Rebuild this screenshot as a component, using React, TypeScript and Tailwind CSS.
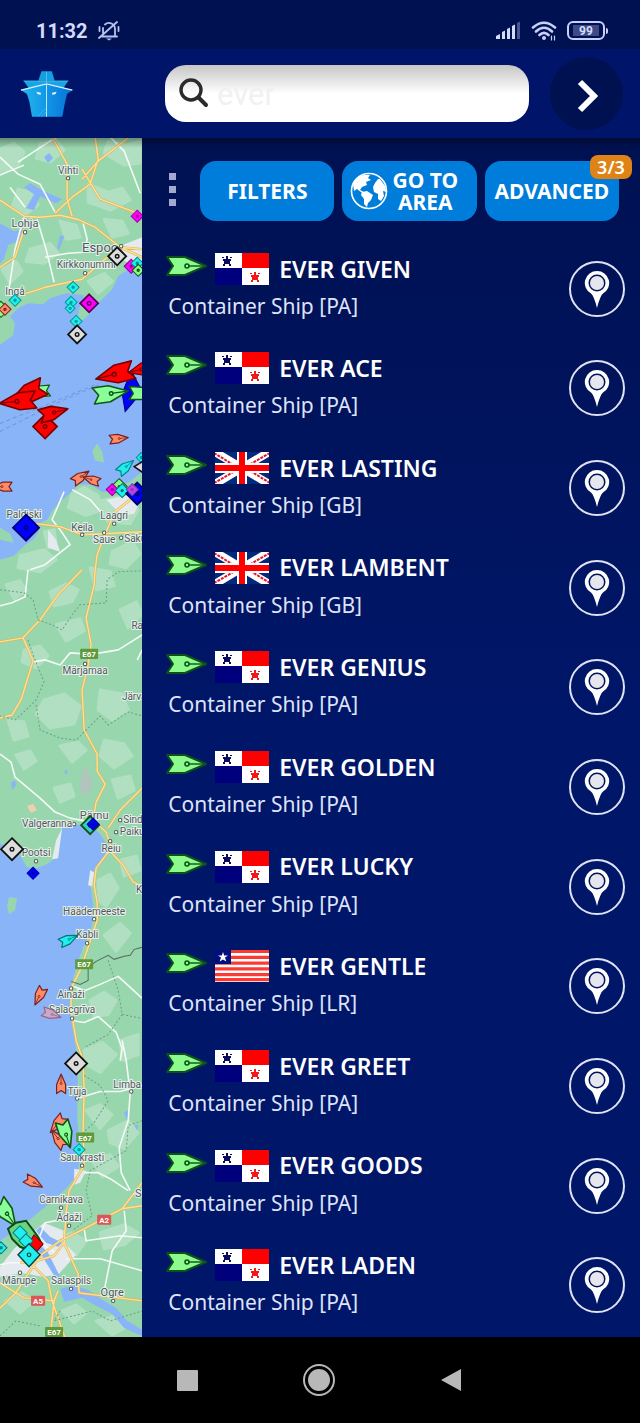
import { useState } from "react"

type Flag = "PA" | "GB" | "LR"

type Vessel = {
  name: string
  flag: Flag
}

const vessels: Vessel[] = [
  { name: "EVER GIVEN", flag: "PA" },
  { name: "EVER ACE", flag: "PA" },
  { name: "EVER LASTING", flag: "GB" },
  { name: "EVER LAMBENT", flag: "GB" },
  { name: "EVER GENIUS", flag: "PA" },
  { name: "EVER GOLDEN", flag: "PA" },
  { name: "EVER LUCKY", flag: "PA" },
  { name: "EVER GENTLE", flag: "LR" },
  { name: "EVER GREET", flag: "PA" },
  { name: "EVER GOODS", flag: "PA" },
  { name: "EVER LADEN", flag: "PA" },
]

// Anchored vessels: centre, half size, fill, outline
const diamonds: [number, number, number, string, string][] = [
  [137, 217, 6, "#f0f", "#a0a"],
  [131, 267, 7, "#f0f", "#808"],
  [137, 264, 6, "#2ee", "#088"],
  [138, 271, 6, "#8f8", "#151"],
  [117, 257, 9, "#ddd", "#111"],
  [89, 304, 9, "#f0f", "#505"],
  [73, 288, 6, "#2ee", "#099"],
  [71, 303, 6, "#2ee", "#099"],
  [70, 309, 5, "#2ee", "#099"],
  [76, 322, 6, "#2ee", "#099"],
  [77, 335, 9, "#ddd", "#111"],
  [15, 301, 6, "#2ee", "#099"],
  [1, 310, 8, "#8f8", "#151"],
  [5, 310, 6, "#ff8a66", "#722"],
  [45, 427, 12, "#f00", "#700"],
  [141, 458, 5, "#2ee", "#099"],
  [119, 487, 8, "#8f8", "#151"],
  [112, 490, 6, "#f0f", "#808"],
  [122, 491, 7, "#2ee", "#077"],
  [137, 494, 11, "#00e", "#006"],
  [132, 490, 6, "#d3e", "#55a"],
  [26, 528, 13, "#00f", "#007"],
  [90, 825, 9, "#3cc", "#151"],
  [93, 824, 6, "#00e", "#00a"],
  [12, 849, 11, "#ddd", "#111"],
  [33, 873, 6, "#00e", "#00b"],
  [76, 1063, 11, "#ddd", "#111"],
  [79, 1149, 6, "#2ee", "#099"],
  [1, 1247, 6, "#2ee", "#077"],
]

// Vessels under way: centre, heading, scale, fill, outline
const arrows: [number, number, number, number, string, string][] = [
  [38, 392, 175, 0.6, "#8f9", "#151"],
  [26, 395, 155, 1, "#f00", "#700"],
  [17, 402, 174, 0.95, "#f00", "#700"],
  [54, 413, -15, 0.75, "#f00", "#700"],
  [114, 375, 166, 1, "#f00", "#700"],
  [141, 370, 166, 0.7, "#f00", "#700"],
  [111, 394, -8, 0.9, "#8f9", "#151"],
  [119, 439, -6, 0.48, "#ff8a66", "#722"],
  [81, 477, -35, 0.5, "#ff8a66", "#722"],
  [91, 480, 198, 0.45, "#ff8a66", "#722"],
  [2, 487, 180, 0.5, "#ff8a66", "#722"],
  [126, 467, -40, 0.5, "#2ee", "#088"],
  [69, 939, -24, 0.5, "#2ee", "#077"],
  [39, 996, 116, 0.5, "#ff8a66", "#722"],
  [52, 1014, 18, 0.5, "#c9a9c9", "#968"],
  [61, 1083, -90, 0.5, "#ff8a66", "#722"],
  [57, 1124, 130, 0.55, "#ff8a66", "#722"],
  [58, 1138, 232, 0.55, "#ff8a66", "#722"],
  [66, 1134, 72, 0.72, "#8f9", "#151"],
  [34, 1182, 28, 0.5, "#ff8a66", "#722"],
  [7, 1213, 55, 0.8, "#8f9", "#151"],
]

// Place labels: x, y, size, text
const places: [number, number, number, string][] = [
  [68, 175, 10, "Vihti"],
  [25, 228, 11, "Lohja"],
  [100, 253, 13, "Espoo"],
  [86, 269, 10, "Kirkkonummi"],
  [15, 296, 10, "Ingå"],
  [24, 518, 10, "Paldiski"],
  [82, 531, 10, "Keila"],
  [114, 519, 10, "Laagri"],
  [104, 543, 10, "Saue"],
  [135, 542, 10, "Saku"],
  [85, 674, 10, "Märjamaa"],
  [137, 629, 10, "Ra"],
  [134, 700, 10, "Järva"],
  [94, 819, 11, "Pärnu"],
  [47, 827, 10, "Valgeranna"],
  [134, 823, 10, "Sindi"],
  [132, 835, 10, "Paiku"],
  [36, 856, 10, "Pootsi"],
  [111, 852, 10, "Reiu"],
  [139, 893, 10, "K"],
  [94, 915, 10, "Häädemeeste"],
  [87, 938, 10, "Kabli"],
  [71, 998, 10, "Ainaži"],
  [72, 1013, 10, "Salacgrīva"],
  [77, 1094, 10, "Tūja"],
  [127, 1087, 10, "Limba"],
  [82, 1160, 10, "Saulkrasti"],
  [61, 1202, 10, "Carnikava"],
  [69, 1220, 10, "Ādaži"],
  [138, 1196, 11, "S"],
  [19, 1283, 10, "Mārupe"],
  [71, 1283, 10, "Salaspils"],
  [112, 1295, 11, "Ogre"],
]

const towns: [number, number][] = [
  [68, 179], [25, 233], [121, 247], [85, 274], [82, 535], [114, 524], [104, 533], [121, 538],
  [85, 664], [74, 824], [120, 820], [116, 832], [36, 861], [110, 841], [94, 919], [87, 943],
  [71, 988], [72, 1018], [77, 1098], [131, 1091], [82, 1165], [61, 1207], [69, 1225],
  [20, 1272], [71, 1288], [113, 1300],
]

const roadSigns: [number, number, string, string][] = [
  [89, 654, "E67", "#5f9a3c"],
  [84, 964, "E67", "#5f9a3c"],
  [85, 1137, "E67", "#5f9a3c"],
  [54, 1331, "E67", "#5f9a3c"],
  [104, 1219, "A2", "#dc5656"],
  [38, 1300, "A5", "#dc5656"],
]

const fields =
  "M0 150l14-6 10 9-6 14-18 6zM40 145l16-4 8 10-14 12-14-4zM108 142l18 4 14-4v22l-16 2-20-12zM18 190l16 4 4 12-14 10-12-8zM88 185l20 8 14-4 8 12-20 10-22-8zM30 250l20-6 8 10-14 10-18-2zM88 282l16-8 8 8-14 12zM60 222l16 4 4 12-14 2zM2 270l14-8 6 10-12 12zM104 220l18 2 6 12-16 4z" +
  "M72 494l12-6 14 8 4 14-16 6-18-8zM96 502l28-6 14 14-8 14-22-2zM44 532l10-2 2 12-8 6zM20 556l24-6 12 10-16 12-22-4zM112 552l20-10 8 12-14 14-16-4zM6 585l14-4 6 10-12 8zM50 592l16-8 12 6-6 12-18 4zM90 568l20 4 4 14-18 4zM120 610l16-8 6 12-14 14zM56 625l24-6 4 12-18 10zM24 650l16-4 8 10-12 12-14-6zM44 700l20-6 16 12-6 18-24 4-14-14zM100 690l22 4 6 16-16 10-14-10zM8 720l16 2 4 14-14 4zM60 746l18-4 8 8-14 12zM104 740l20 4 8 12-18 12-14-12zM16 755l14-4 6 10-12 8zM112 780l18-4 4 14-16 8zM54 788l16-4 4 12-14 6z" +
  "M98 880l12-6 8 14-12 18-8-6zM120 860l16-4 4 14-16 6zM104 935l16-12 10 10-14 18zM90 1000l14-8 12 8-8 14-14 2zM84 1050l18-8 14 12-16 18-14-8zM120 1040l18-6v20l-16 6zM86 1110l14-6 12 10-12 14zM108 1130l20-10 10 12-14 16-14-6zM92 1160l18-6 8 12-16 10zM52 1240l20-8 14 8-10 14-20-2zM100 1232l24-8 14 8-14 12-20 4zM6 1300l16-8 12 8-14 12zM62 1310l14-6 10 8-12 10zM96 1320l22-6 12 10-18 10zM4 1265l16-5 12 8-20 12z"

const yellowRoads =
  "M52 138L67 165L67 200L72 217M0 201L24 217L40 218L60 216L77 220L95 228L120 248L142 250M24 230L15 258L0 268M142 258L120 248L102 262L82 280L45 288L20 296M95 138L98 160L90 185L72 198L55 214M129 138L98 162L82 180M82 170L100 200L137 214" +
  "M36 524L60 527L82 535L104 534L142 532M130 500L115 512L105 534L97 555L95 570L94 585L86 618L91 645L88 665L82 690L84 730L97 754L97 771L105 784L96 802L93 820L106 832L111 848L96 868L94 885L97 903L97 920L88 947L80 970L71 988L71 1010L76 1040L83 1060L84 1090L83 1130L84 1165L69 1190L66 1212L64 1242L54 1255L30 1262L20 1262M0 642L23 638L40 620L58 595L82 570M23 638L33 661L21 700L12 715L0 718M111 852L123 865L133 882L142 886M142 788L120 810L108 828" +
  "M142 1182L122 1208L84 1228L60 1240L40 1255L30 1270L15 1293L0 1307M30 1262L48 1280L52 1300L66 1340M0 1282L24 1297L54 1300L58 1290M64 1242L78 1273L79 1292L142 1300M54 1300L50 1337M122 1208L142 1205"

const whiteRoads =
  "M0 158L18 175L40 185L55 213M18 163L50 142L56 139M110 138L124 152L140 194M0 176L24 166M10 188L25 208M37 220L46 250L54 283M45 258L68 254L84 253L87 240L83 224M24 217L15 250L8 296" +
  "M142 635L118 650L100 653L85 654L70 653L60 665L45 660L33 662M28 570L25 597L12 603L0 606M64 492L52 520L60 530L70 545L45 565L30 570M0 754L11 762L15 777L40 798L55 812L70 818L90 822M142 650L137 660M72 490L90 500L103 515" +
  "M71 985L85 990L100 984L118 976L142 998M72 1020L84 1022L98 1016L116 1032L122 1048L120 1060M122 1040L126 1060L130 1092L128 1120L119 1147L121 1172L130 1190M77 1098L100 1091L120 1091L142 1085M84 1172L98 1172L110 1178L128 1190M66 1218L45 1222L38 1240L55 1252M66 1258L100 1258L142 1270M84 1228L86 1240L120 1235L142 1237M30 1262L10 1262L0 1264M124 1210L126 1230L112 1250L104 1290"

const borders =
  "M0 590L24 593L33 600L38 620L52 625L62 630L72 615L80 605L106 603L107 580L118 572L142 571M28 640L33 655L44 682L36 700L26 710L15 720L0 716M36 705L40 730L60 738L76 740L100 716L108 725L128 712L142 716M108 960L118 990L122 1014L108 1034L86 1046M122 1014L142 1018M84 1075L100 1085L108 1100L94 1122L80 1135M142 1120L128 1125L126 1150L90 1170L86 1190L92 1215L72 1230M60 1310L54 1320L92 1310L110 1320L142 1310M0 1335L16 1320L40 1325"

function ShipArrow({ fill, stroke, outline }: { fill: string; stroke: string; outline: number }) {
  return (
    <>
      <path d="M-20-9H-2L19 0L-2 9H-20L-14 0z" fill={fill} stroke={stroke} strokeWidth={outline} vectorEffect="non-scaling-stroke" strokeLinejoin="round" />
      <path d="M2 0H17" stroke={stroke} strokeWidth="1.4" />
      <circle r="2" fill="none" stroke={stroke} strokeWidth="1.6" />
    </>
  )
}

function VesselMap() {
  return (
    <svg viewBox="0 138 142 1199" preserveAspectRatio="xMidYMid slice" className="absolute inset-0 h-full w-full" role="img" aria-label="Live map">
      <path d="M0 138H142V1337H0z" fill="#8ab4f8" />
      <g fill="#98d6ae">
        <path d="M0 138H142V268L128 270L118 277L112 290L100 302L86 318L76 326L79 310L84 296L66 294L50 299L43 305L28 304L18 309L10 317L15 324L13 336L0 345z" />
        <path d="M0 528L10 534L14 543L0 540zM0 560L14 556L24 546L33 540L39 532L38 524L47 520L52 511L60 502L72 492L78 485L90 485L103 493L115 490L130 482L142 472V1337H0V1240L20 1227L37 1213L67 1187L78 1173L80 1150L77 1117L78 1060L71 1020L71 985L80 955L92 925L93 905L90 882L95 868L105 858L108 846L100 834L90 824L72 825L62 828L58 845L55 858L47 864L36 868L27 867L20 855L0 843z" />
        <path d="M97 444l5 8 2 11-9-2-3-9zM9 897l8 1-2 12-6 4-2-8z" />
      </g>
      <path d={fields} fill="#b0dfc1" strokeLinejoin="round" stroke="#b0dfc1" strokeWidth="3" />
      <g fill="#8ab4f8">
        <path d="M30 184l14 8 18 8-6 4-16-7-6 14-8-2 8-14-10-7zM0 224l14 8 10-2-6 12-10 4-4 14-4 4zM44 158l5-4 4 5-5 5zM0 240l10-5-3 16zM60 236l4 1-5 14-2-2zM124 1112l5-3-2 12zM134 1125l4-1-1 6zM60 1288l14-3 14 4 14 10 14 8 10 12 16 10v6l-18-8-12-14-16-8-14-8-18 4z" />
        <path d="M11 783l4-3 1 5-4 5zM64 770l4 1-2 4z" />
      </g>
      <path d="M30 1234l14-12 20 8 2 14 10 10-18 20-16 2-20-4-22 4v-10l14-18zM122 246l20-8v30h-8l-12-8zM56 840l6-12-4 30-6 1zM90 870l4 2-2 14-4-1zM74 1168l12 2-6 12-6 2zM48 530l8 10 4 12-12-4zM106 500l20-4 16 2-8 16-12 2z" fill="#e4eaee" />
      <path d="M83 766l8 10 2 10-8 12-6-10z" fill="#b0c6bd" />
      <path d="M27 806l6-2 4 6-6 3z" fill="#f1cfae" />
      <path d="M36 1240l12 12 14 28-6-2-16-26-8-8zM40 1226l10 10 12 6-4 4-12-4-10-12z" fill="#8ab4f8" />
      <path d="M0 432L60 402L100 385M0 424L40 408L98 384" stroke="#6e97de" strokeDasharray="4 3" fill="none" />
      <path d={whiteRoads} fill="none" stroke="#f5faf6" strokeWidth="1.6" strokeLinejoin="round" />
      <path d={yellowRoads} fill="none" stroke="#e0b557" strokeWidth="2.6" strokeLinejoin="round" />
      <path d={yellowRoads} fill="none" stroke="#fbe19c" strokeWidth="1.4" strokeLinejoin="round" />
      <path d={borders} fill="none" stroke="#6f9f84" strokeDasharray="2 2" />
      <path d="M71 981L80 984L88 980L88 967L96 961L108 955L114 959L124 956L130 955L134 949L142 947" fill="none" stroke="#566b62" />
      {towns.map(([x, y]) => (
        <circle key={`${x}-${y}`} cx={x} cy={y} r="1.7" fill="#fff" stroke="#555" />
      ))}
      {places.map(([x, y, size, text]) => (
        <text key={text} x={x} y={y} fontSize={size} textAnchor="middle" fill="#51585c" stroke="#e6f1ea" strokeWidth="2" paintOrder="stroke" className="font-[Roboto,sans-serif]">
          {text}
        </text>
      ))}
      {roadSigns.map(([x, y, text, fill]) => (
        <g key={`${x}-${y}`}>
          <rect x={x - (text.length > 2 ? 9 : 7)} y={y - 5} width={text.length > 2 ? 18 : 14} height="10" rx="1" fill={fill} />
          <text x={x} y={y + 3} fontSize="8" textAnchor="middle" fill="#fff" className="font-[Roboto,sans-serif] font-bold">{text}</text>
        </g>
      ))}
      <path d="M131 371L142 392L125 412L122 394z" fill="#00f" stroke="#007" />
      {diamonds.map(([x, y, r, fill, stroke]) => (
        <g key={`${x}-${y}`}>
          <path d={`M${x} ${y - r}L${x + r} ${y}L${x} ${y + r}L${x - r} ${y}z`} fill={fill} stroke={stroke} strokeWidth={r > 8 ? 1.8 : 1} />
          <circle cx={x} cy={y} r={r > 8 ? 1.8 : 1} fill="none" stroke={stroke} strokeWidth="1.4" />
        </g>
      ))}
      {arrows.map(([x, y, angle, scale, fill, stroke]) => (
        <g key={`${x}-${y}`} transform={`translate(${x} ${y}) rotate(${angle}) scale(${scale})`}>
          <ShipArrow fill={fill} stroke={stroke} outline={scale > 0.7 ? 1.6 : 1.2} />
        </g>
      ))}
      <path d="M129 387l15 1v12h-15l4-6z" fill="#8f9" stroke="#151" strokeWidth="1.5" />
      <path d="M134 467L144 461V474z" fill="#ddd" stroke="#111" strokeWidth="1.6" />
      <path d="M8 1228L16 1222L26 1220L38 1236L42 1244L30 1250L20 1246L12 1238z" fill="#6cd383" stroke="#0b4d12" strokeWidth="2" />
      <path d="M34 1234L43 1243L36 1252L28 1244z" fill="#f00" stroke="#700" />
      <path d="M20 1225l7 7-7 7-7-7zM26 1233l7 7-7 7-7-7z" fill="#2ee" stroke="#077" />
      <path d="M29 1243L40 1254L29 1266L18 1254z" fill="#2ee" stroke="#044" strokeWidth="1.4" />
      <circle cx="29" cy="1254" r="1.8" fill="none" stroke="#044" strokeWidth="1.2" />
    </svg>
  )
}

function FlagIcon({ flag }: { flag: Flag }) {
  if (flag === "GB") {
    return (
      <svg viewBox="0 0 54 32" className="h-8 w-[54px]" role="img" aria-label="United Kingdom">
        <path d="M0 0H54V32H0z" fill="#012a7c" />
        <path d="M0 0L54 32M54 0L0 32" stroke="#fff" strokeWidth="8" />
        <path d="M-1 1L22 15M55 31L32 17M55 1L32 14M-1 31L22 18" stroke="#e8142b" strokeWidth="2" strokeDasharray="3 1" />
        <path d="M27 0V32M0 16H54" stroke="#fff" strokeWidth="10" />
        <path d="M27 0V32M0 16H54" stroke="#f00" strokeWidth="6" />
      </svg>
    )
  }
  if (flag === "LR") {
    return (
      <svg viewBox="0 0 54 32" className="h-8 w-[54px]" role="img" aria-label="Liberia">
        <path d="M0 0H54V32H0z" fill="#fff" />
        <path d="M0 1.5H54M0 7.3H54M0 13.1H54M0 18.9H54M0 24.7H54M0 29.6H54" stroke="#fb3b33" strokeWidth="3.2" />
        <path d="M0 0H16V14H0z" fill="#000f80" />
        <path d="M8 2l1.2 3.4H13l-3 2.2 1.3 4L8 9.4 4.7 11.6 6 7.6 3 5.4h3.8z" fill="#fff" />
      </svg>
    )
  }
  return (
    <svg viewBox="0 0 54 32" className="h-8 w-[54px]" role="img" aria-label="Panama">
      <path d="M0 0H54V32H0z" fill="#fff" />
      <path d="M27 0H54V15H27z" fill="#f00" />
      <path d="M0 15H27V32H0z" fill="#00007c" />
      <path d="M11 3h2v3h3v2h-1v3h1v2h-2v-2h-4v2H8v-2h1V8H8V6h3zM7 4h2v1H7zM15 4h2v1h-2z" fill="#0a0a60" />
      <path d="M39 19h2v3h3v2h-1v3h1v2h-2v-2h-4v2h-2v-2h1v-3h-1v-2h3zM35 20h2v1h-2zM43 20h2v1h-2z" fill="#f01818" />
    </svg>
  )
}

function StatusBar() {
  return (
    <div className="flex h-[49px] items-center bg-[#001152] pt-3 pr-8 pl-9 font-[Roboto,sans-serif] text-[#d5dbfa]">
      <span className="text-xl font-bold">11:32</span>
      <svg viewBox="0 0 22 20" className="ml-2.5 h-5 w-[22px]" fill="none" stroke="#b9c2ee" strokeWidth="1.8">
        <path d="M4 15.5H19M17 15V8A6 6 0 0 0 7 3.5M5 7V12M1 17L19 1M1.5 6V10M20.5 6V10" strokeLinecap="round" />
        <path d="M8 17.5H14L11 19.5z" fill="#b9c2ee" stroke="none" />
      </svg>
      <div className="ml-auto flex items-center gap-2.5">
        <svg viewBox="0 0 25 19" className="h-[19px] w-[25px]" fill="#d5dbfa">
          <path d="M0 15l4-2v5H0zM6 11l3-1.5V18H6zM11 8l3-1.5V18h-3zM16 5l3-1.5V18h-3z" />
          <path d="M21 2l3-1.5V18h-3z" opacity=".35" />
        </svg>
        <svg viewBox="0 0 26 20" className="h-5 w-[26px]" fill="none" stroke="#c8d0fa" strokeWidth="2.6" strokeLinecap="round">
          <path d="M2 6.5Q13-3 24 6.5M5 10.5Q13 3 21 10.5M8.5 14Q13 9.5 17.5 14" />
          <circle cx="13" cy="17" r="2" fill="#c8d0fa" stroke="none" />
          <path d="M20.5 19V15M23.5 15V19" strokeWidth="1.2" />
        </svg>
        <div className="flex items-center gap-px">
          <div className="flex h-[19px] w-[38px] items-center justify-center rounded-md border-2 border-[#c8d0fa] px-1 py-0.5">
            <span className="flex h-full w-full items-center justify-center bg-[#3d4a86] text-xs font-bold">99</span>
          </div>
          <div className="h-1.5 w-0.5 rounded-r bg-[#c8d0fa]" />
        </div>
      </div>
    </div>
  )
}

function Logo() {
  return (
    <svg viewBox="54 204 168 152" className="h-12 w-[53px]" role="img" aria-label="MarineTraffic">
      <defs>
        <linearGradient id="hull" x1="0" x2="1">
          <stop offset="0" stopColor="#22b8f0" />
          <stop offset=".5" stopColor="#1296e6" />
          <stop offset="1" stopColor="#0572d8" />
        </linearGradient>
      </defs>
      <path d="M122 208H155L164 238H112z" fill="#159fe0" />
      <path d="M65 238H207L192 261L138 246L82 262z" fill="#18a5e6" />
      <path d="M57 267L138 247L220 267L203 280L196 310L188 352H92L84 305L76 280z" fill="url(#hull)" />
      <path d="M57 268L138 248L220 268" fill="none" stroke="#d9f4ff" strokeWidth="4" />
      <path d="M138 210V246" stroke="#6fd0f5" strokeWidth="2" />
      <path d="M138 248V352" stroke="#c4eefc" strokeWidth="3" />
      <path d="M65 239H207" stroke="#5bc6f2" strokeWidth="2" />
      <path d="M106 273l14 3v6l-10-1zM170 273l-14 3v6l10-1z" fill="#e8f8ff" />
      <path d="M138 322L110 352M138 336L122 352" stroke="#4cc4f5" strokeWidth="2" />
    </svg>
  )
}

function VesselRow({ vessel }: { vessel: Vessel }) {
  return (
    <li className="flex flex-1 items-center pr-[15px] pl-6">
      <div className="flex-1">
        <div className="flex h-[34px] items-center">
          <svg viewBox="-21 -11 42 22" className="-mt-1.5 h-[22px] w-[42px]">
            <ShipArrow fill="#8dfa8d" stroke="#0c5218" outline={2} />
          </svg>
          <div className="mr-2.5 ml-[7px]">
            <FlagIcon flag={vessel.flag} />
          </div>
          <h2 className="text-[23px] font-semibold whitespace-nowrap text-white">{vessel.name}</h2>
        </div>
        <p className="pl-0.5 text-[21px] leading-10 whitespace-nowrap text-[#dfe3f8]">Container Ship [{vessel.flag}]</p>
      </div>
      <button type="button" aria-label={`Show ${vessel.name} on map`} className="flex size-14 items-center justify-center rounded-full border-2 border-[#dfe2f2]">
        <svg viewBox="0 0 26 40" className="h-10 w-[26px]">
          <path d="M13 2A12 12 0 0 0 7 24.5Q10 27 13 39Q16 27 19 24.5A12 12 0 0 0 13 2z" fill="#fff" />
          <circle cx="13" cy="14" r="8.5" fill="#00145c" />
          <circle cx="13" cy="14" r="7" fill="#e6e6ee" />
        </svg>
      </button>
    </li>
  )
}

export default function App() {
  const [query, setQuery] = useState("ever")

  return (
    <div className="flex min-h-screen flex-col bg-black font-['Noto_Sans',sans-serif]">
      <StatusBar />

      <header className="flex h-[89px] items-center bg-[#00156a] pr-[17px] pl-5">
        <div className="w-[145px] shrink-0">
          <Logo />
        </div>
        <label className="flex h-[57px] min-w-0 flex-1 items-center gap-2 rounded-[21px] bg-linear-to-b from-[#c6c6c6] to-white to-50% px-3">
          <svg viewBox="0 0 32 32" className="size-8 shrink-0" fill="none" stroke="#2b2b2b" strokeLinecap="round">
            <circle cx="14" cy="12" r="10" strokeWidth="3.4" />
            <path d="M21.5 19.500L29 27" strokeWidth="4" />
          </svg>
          <input
            type="text"
            aria-label="Search vessels"
            value={query}
            onChange={(e) => setQuery(e.target.value)}
            className="min-w-0 flex-1 bg-transparent pt-1 font-[Roboto,sans-serif] text-[31px] text-[#f1f1f1] outline-none"
          />
        </label>
        <button type="button" aria-label="Close search" className="ml-[21px] flex size-[73px] shrink-0 items-center justify-center rounded-full bg-[#001152]">
          <svg viewBox="-4 -2 22 38" className="h-[38px] w-[22px]" fill="none" stroke="#fff" strokeWidth="6">
            <path d="M0 5L14 19L0 33" />
          </svg>
        </button>
      </header>

      <main className="relative flex flex-1">
        <section className="relative w-2/9 shrink-0 overflow-hidden">
          <VesselMap />
        </section>

        <section className="flex min-w-0 flex-1 flex-col bg-linear-to-b from-[#001152] to-[#001669] to-50% pb-0.5">
          <div className="flex items-start pt-[23px] pr-[21px] pb-[18px] pl-[27px]">
            <button type="button" aria-label="More options" className="mt-3 mr-6 flex flex-col gap-1.5">
              <span className="size-[7px] bg-[#a3a8d0]" />
              <span className="size-[7px] bg-[#a3a8d0]" />
              <span className="size-[7px] bg-[#a3a8d0]" />
            </button>
            <div className="grid flex-1 grid-cols-3 gap-2 text-[21px] leading-[22px] font-bold text-white">
              <button type="button" className="h-[60px] rounded-2xl bg-[#007dda]">FILTERS</button>
              <button type="button" className="flex h-[60px] items-center gap-1 rounded-2xl bg-[#007dda] pl-2">
                <svg viewBox="0 0 38 38" className="size-[38px] shrink-0">
                  <circle cx="19" cy="19" r="17.5" fill="#007dda" stroke="#fff" strokeWidth="1.6" />
                  <path d="M3 12Q7 4 14 3L20 3L18 6L21 8L16 10L17 13L12 15L10 18L14 20L12 21L7 17L4 19zM12 20L17 19L23 23L21 28L18 31L17 35L14 32L14 27L11 23zM25 11L28 7L30 7L35 14L36.5 20L33 19L34 24L31 29L28 27L28 22L24 20L23 15z" fill="#fff" />
                </svg>
                <span>GO TO<br />AREA</span>
              </button>
              <button type="button" className="relative h-[60px] rounded-2xl bg-[#007dda]">
                ADVANCED
                <span className="absolute -top-1.5 -right-[13px] flex h-6 w-[42px] items-center justify-center rounded-lg bg-[#de8316] text-lg font-semibold">3/3</span>
              </button>
            </div>
          </div>

          <ul className="flex flex-1 flex-col">
            {vessels.map((vessel) => (
              <VesselRow key={vessel.name} vessel={vessel} />
            ))}
          </ul>
        </section>

        <div className="pointer-events-none absolute inset-x-0 top-0 h-2.5 bg-linear-to-b from-black/35 to-transparent" />
      </main>

      <nav className="flex h-[86px] items-center justify-center gap-[100px] pr-0.5">
        <button type="button" aria-label="Recent apps" className="flex size-8 items-center justify-center">
          <span className="size-[21px] rounded-[1px] bg-[#b8b8b8]" />
        </button>
        <button type="button" aria-label="Home" className="flex size-8 items-center justify-center rounded-full border-2 border-[#b8b8b8]">
          <span className="size-[22px] rounded-full bg-[#b8b8b8]" />
        </button>
        <button type="button" aria-label="Back" className="flex size-8 items-center justify-center">
          <svg viewBox="0 0 20 24" className="h-6 w-5" fill="#b8b8b8">
            <path d="M20 1V23L0 12z" />
          </svg>
        </button>
      </nav>
    </div>
  )
}
